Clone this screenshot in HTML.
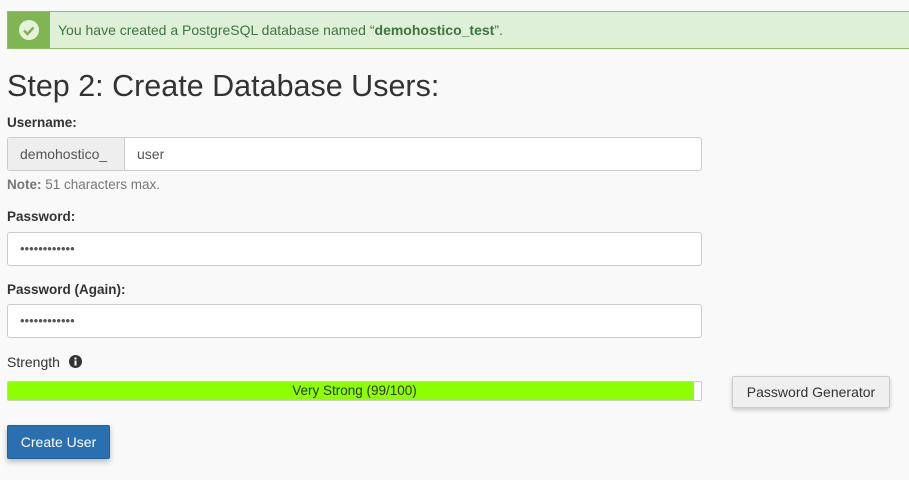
<!DOCTYPE html>
<html><head><style>
body{margin:0;background:#f9f9f9;font-family:"Liberation Sans",sans-serif;color:#333;width:909px;height:480px;overflow:hidden;position:relative}
.a{position:absolute}
.alert{left:7px;top:11px;width:910px;height:38px;border:1px solid #8cc162;background:#dff0d8;box-sizing:border-box}
.ic{left:0;top:0;width:42px;height:36px;background:#7fb552}
.lbl{font-size:13.5px;font-weight:bold;color:#333}
.inp{background:#fff;border:1px solid #ccc;border-radius:3px;box-sizing:border-box}
.dots{font-size:13px;left:12px;top:8px;color:#555}
</style></head><body>
<div class="a alert"><div class="a ic"><svg width="42" height="36"><circle cx="21" cy="18" r="10" fill="#e6f2dc"/><path d="M16 18.5l3.5 3.5 6-6.5" stroke="#7fb552" stroke-width="2.6" fill="none"/></svg></div>
<div class="a" style="left:50px;top:10px;font-size:14px;color:#3c763d">You have created a PostgreSQL database named “<b>demohostico_test</b>”.</div></div>
<div class="a" style="left:7px;top:69px;font-size:30.5px;color:#333">Step 2: Create Database Users:</div>
<div class="a lbl" style="left:7px;top:115px">Username:</div>
<div class="a inp" style="left:7px;top:137px;width:695px;height:34px"></div>
<div class="a" style="left:8px;top:138px;width:116px;height:32px;background:#eee;border-right:1px solid #ccc;border-radius:3px 0 0 3px"></div>
<div class="a" style="left:20px;top:146px;font-size:14px;color:#555">demohostico_</div>
<div class="a" style="left:137px;top:146px;font-size:14px;color:#555">user</div>
<div class="a" style="left:7px;top:177px;font-size:13.5px;color:#777"><b>Note:</b> 51 characters max.</div>
<div class="a lbl" style="left:7px;top:209px">Password:</div>
<div class="a inp" style="left:7px;top:232px;width:695px;height:34px"><div class="a dots">••••••••••••</div></div>
<div class="a lbl" style="left:7px;top:282px">Password (Again):</div>
<div class="a inp" style="left:7px;top:304px;width:695px;height:34px"><div class="a dots">••••••••••••</div></div>
<div class="a" style="left:7px;top:354px;font-size:14px;color:#333">Strength</div>
<svg class="a" style="left:68px;top:354px" width="15" height="15"><circle cx="7.5" cy="7.5" r="6.5" fill="#333"/><rect x="6.5" y="6.5" width="2" height="5" fill="#fff"/><rect x="6.5" y="3.5" width="2" height="2" fill="#fff"/></svg>
<div class="a" style="left:7px;top:381px;width:695px;height:20px;background:#fff;border:1px solid #ccc;box-sizing:border-box;border-radius:2px"></div>
<div class="a" style="left:8px;top:382px;width:686px;height:18px;background:#8cff00"></div>
<div class="a" style="left:7px;top:383px;width:695px;text-align:center;font-size:13.5px;color:#333">Very Strong (99/100)</div>
<div class="a" style="left:732px;top:376px;width:158px;height:32px;background:#efefef;border:1px solid #ccc;box-sizing:border-box;box-shadow:0 2px 4px rgba(0,0,0,.2);border-radius:2px;text-align:center;line-height:30px;font-size:14px;color:#333">Password Generator</div>
<div class="a" style="left:7px;top:425px;width:103px;height:34px;background:#2a6fb0;border:1px solid #245f98;box-sizing:border-box;box-shadow:0 3px 6px rgba(0,0,0,.25);border-radius:2px;text-align:center;line-height:32px;font-size:14px;color:#fff">Create User</div>
</body></html>
